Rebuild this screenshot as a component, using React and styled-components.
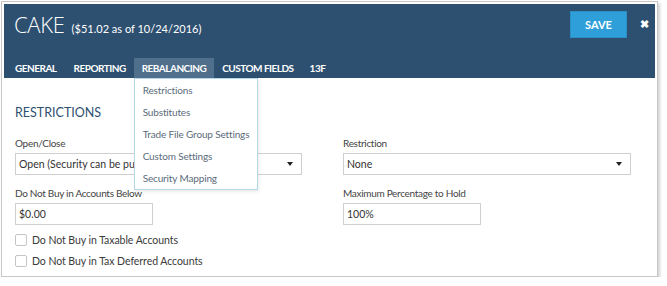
import styled, { createGlobalStyle } from "styled-components";

const GlobalStyle = createGlobalStyle`
  body {
    margin: 0;
    background: #ffffff;
    font-family: "Lato", "Liberation Sans", sans-serif;
  }
`;

const Frame = styled.div`
  position: relative;
  margin: 1px 0 0 1px;
  width: 651px;
  height: 270px;
  border: 1px solid #c6c6c6;
  padding: 2px;
  background: #fff;
  box-shadow: 2px 2px 3px rgba(0, 0, 0, 0.18);
`;

const Header = styled.div`
  background: #2d5070;
  height: 74px;
  display: flex;
  flex-direction: column;
  justify-content: space-between;
`;

const TopRow = styled.div`
  display: flex;
  align-items: flex-start;
  padding: 7px 6px 0 10px;
`;

const Title = styled.div`
  color: #fff;
  font-family: "Open Sans", sans-serif;
  font-size: 22px;
  font-weight: 300;
  line-height: 28px;
  margin-top: -1px;
  flex: 1;
  letter-spacing: -0.3px;
`;

const Sub = styled.span`
  font-family: "Lato", sans-serif;
  font-size: 11px;
  font-weight: 400;
  margin-left: 7px;
  letter-spacing: 0;
`;

const SaveButton = styled.button`
  box-sizing: border-box;
  background: #2e9fd8;
  color: #fff;
  border: 1px solid #2a8fc4;
  width: 57px;
  height: 27px;
  font-family: "Lato", sans-serif;
  font-size: 11px;
  font-weight: 700;
  padding: 0;
`;

const Close = styled.span`
  color: #fff;
  font-size: 11px;
  font-weight: 900;
  margin: 7px 0 0 13px;
  line-height: 12px;
`;

const Tabs = styled.div`
  display: flex;
  padding-left: 3px;
  height: 20px;
`;

const Tab = styled.div`
  position: relative;
  color: #fff;
  font-size: 10px;
  font-weight: 700;
  letter-spacing: -0.5px;
  line-height: 20px;
  padding: 0 8px;
  margin-right: ${(p) => p.$gap || 0}px;
  background: ${(p) => (p.$active ? "#4f6f8c" : "transparent")};
`;

const Menu = styled.div`
  position: absolute;
  top: 20px;
  left: 0;
  width: 122px;
  background: #fff;
  border: 1px solid #b3d8ea;
  box-shadow: 1px 2px 3px rgba(0, 0, 0, 0.08);
  z-index: 2;
`;

const MenuItem = styled.div`
  color: #5b6b7c;
  font-size: 10px;
  font-weight: 400;
  letter-spacing: -0.15px;
  line-height: 22px;
  padding-left: 8px;
  white-space: nowrap;
`;

const Body = styled.div`
  padding: 27px 0 0 11px;
`;

const Section = styled.div`
  color: #2d5070;
  font-size: 12.5px;
  line-height: 16px;
  margin-bottom: 16px;
`;

const Grid = styled.div`
  display: grid;
  grid-template-columns: 287px 288px;
  column-gap: 41px;
  row-gap: 12px;
`;

const Field = styled.div`
  display: flex;
  flex-direction: column;
`;

const Label = styled.div`
  color: #444;
  font-size: 10px;
  letter-spacing: -0.3px;
  line-height: 13px;
  margin-bottom: 3px;
`;

const Box = styled.div`
  box-sizing: border-box;
  width: ${(p) => p.$w || "100%"};
  height: 22px;
  border: 1px solid #cfcfcf;
  display: flex;
  align-items: center;
  justify-content: space-between;
  padding: 0 8px 0 3px;
  color: #333;
  font-size: 10.5px;
  white-space: nowrap;
  overflow: hidden;
`;

const Arrow = styled.span`
  width: 0;
  height: 0;
  border-left: 3px solid transparent;
  border-right: 3px solid transparent;
  border-top: 4px solid #222;
`;

const Checks = styled.div`
  margin-top: 9px;
  display: flex;
  flex-direction: column;
  gap: 9px;
`;

const CheckRow = styled.label`
  display: flex;
  align-items: center;
  color: #3a3a3a;
  font-size: 10.5px;
  letter-spacing: -0.05px;
  line-height: 12px;
`;

const CheckBox = styled.span`
  box-sizing: border-box;
  width: 12px;
  height: 12px;
  border: 1px solid #c4c4c4;
  border-radius: 2px;
  margin-right: 5px;
`;

export default function App() {
  return (
    <>
      <GlobalStyle />
      <Frame>
        <Header>
          <TopRow>
            <Title>
              CAKE<Sub>($51.02 as of 10/24/2016)</Sub>
            </Title>
            <SaveButton>SAVE</SaveButton>
            <Close>✖</Close>
          </TopRow>
          <Tabs>
            <Tab $gap={1}>GENERAL</Tab>
            <Tab>REPORTING</Tab>
            <Tab $active>
              REBALANCING
              <Menu>
                <MenuItem>Restrictions</MenuItem>
                <MenuItem>Substitutes</MenuItem>
                <MenuItem>Trade File Group Settings</MenuItem>
                <MenuItem>Custom Settings</MenuItem>
                <MenuItem>Security Mapping</MenuItem>
              </Menu>
            </Tab>
            <Tab>CUSTOM FIELDS</Tab>
            <Tab>13F</Tab>
          </Tabs>
        </Header>
        <Body>
          <Section>RESTRICTIONS</Section>
          <Grid>
            <Field>
              <Label>Open/Close</Label>
              <Box>
                Open (Security can be pu
                <Arrow />
              </Box>
            </Field>
            <Field>
              <Label>Restriction</Label>
              <Box>
                None
                <Arrow />
              </Box>
            </Field>
            <Field>
              <Label>Do Not Buy in Accounts Below</Label>
              <Box $w="138px">$0.00</Box>
            </Field>
            <Field>
              <Label>Maximum Percentage to Hold</Label>
              <Box $w="138px">100%</Box>
            </Field>
          </Grid>
          <Checks>
            <CheckRow>
              <CheckBox />
              Do Not Buy in Taxable Accounts
            </CheckRow>
            <CheckRow>
              <CheckBox />
              Do Not Buy in Tax Deferred Accounts
            </CheckRow>
          </Checks>
        </Body>
      </Frame>
    </>
  );
}
